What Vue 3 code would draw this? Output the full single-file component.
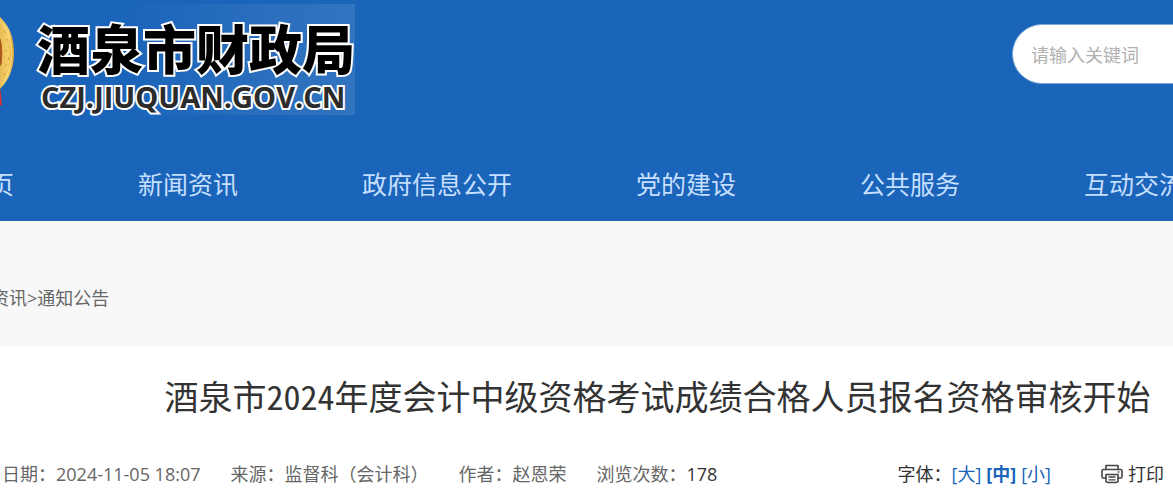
<script setup>
import { ref } from 'vue'

const nav = ['首页', '新闻资讯', '政府信息公开', '党的建设', '公共服务', '互动交流']
const meta = [
  { label: '日期', value: '2024-11-05 18:07' },
  { label: '来源', value: '监督科（会计科）' },
  { label: '作者', value: '赵恩荣' },
  { label: '浏览次数', value: '178', strong: true },
]
const sizes = ['大', '中', '小']
const current = ref('中')
const keyword = ref('')
</script>

<template>
  <div class="page">
    <header class="header">
      <div class="top">
        <a class="brand" href="#">
          <svg class="emblem" viewBox="0 0 16 111" aria-hidden="true">
            <defs>
              <linearGradient id="gold" x1="0" y1="0" x2="1" y2="0">
                <stop offset="0" stop-color="#e9bc55" />
                <stop offset="0.6" stop-color="#f6cf68" />
                <stop offset="1" stop-color="#d79c35" />
              </linearGradient>
            </defs>
            <path d="M0 84 L1 91 L2 102 L0 101 Z" fill="#d8322f" />
            <path d="M0 13 Q14 26 14 49 Q14 71 0 85 Z" fill="url(#gold)" />
            <path d="M0 17 Q11 29 12 49 Q12 67 2 80" fill="none" stroke="#f9dc84" stroke-width="1" />
            <path d="M4 27l1 2M7 35l1 2M5 46l2 1M9 53l-1 3M5 62l2-2M4 71l1-2M8 42l1 1" stroke="#cf983b" stroke-width="1" />
            <path d="M0 35 Q3 46 1 60 L0 62 Z" fill="#bd3a27" stroke="#a8651c" stroke-width="1" />
          </svg>
          <span class="wordmark">
            <span class="name">酒泉市财政局</span>
            <span class="domain">CZJ.JIUQUAN.GOV.CN</span>
          </span>
        </a>
        <form class="search" @submit.prevent>
          <input v-model="keyword" type="text" aria-label="请输入关键词" placeholder="请输入关键词" />
        </form>
      </div>
      <nav class="nav">
        <a v-for="item in nav" :key="item" href="#">{{ item }}</a>
      </nav>
    </header>

    <div class="crumbs">
      <a href="#">新闻资讯</a><span>&gt;</span><a href="#">通知公告</a>
    </div>

    <main class="article">
      <h1>酒泉市2024年度会计中级资格考试成绩合格人员报名资格审核开始</h1>
      <div class="info">
        <div class="meta">
          <span v-for="m in meta" :key="m.label">{{ m.label }}：<span :class="{ count: m.strong }">{{ m.value }}</span></span>
        </div>
        <div class="tools">
          <div class="sizes">
            <span>字体：</span>
            <button
              v-for="s in sizes"
              :key="s"
              type="button"
              :class="{ active: s === current }"
              @click="current = s"
            >[{{ s }}]</button>
          </div>
          <button class="print" type="button">
            <svg viewBox="0 0 22 20" aria-hidden="true" fill="none" stroke="#444" stroke-width="1.6" stroke-linejoin="round">
              <path d="M5 5V1.5H17V5" />
              <path d="M5 14H2.5Q1 14 1 12.5V7Q1 5.5 2.5 5.5H19.5Q21 5.5 21 7V12.5Q21 14 19.5 14H17" />
              <path d="M5 10.5H17V16.5Q17 18.5 15 18.5H7Q5 18.5 5 16.5Z" />
              <path d="M7.5 13H14.5M7.5 15.8H14.5" stroke-width="1.3" />
              <path d="M16.5 8H18.5" stroke-width="1.3" />
            </svg>
            打印
          </button>
        </div>
      </div>
    </main>
  </div>
</template>

<style>
body {
  margin: 0;
  background: #fff;
}
</style>

<style scoped>
.page {
  overflow: hidden;
  font-family: "Open Sans", "Noto Sans CJK SC", sans-serif;
  font-size: 18px;
  line-height: 26px;
  color: #666;
}
a {
  color: inherit;
  text-decoration: none;
}
button {
  padding: 0;
  border: 0;
  background: none;
  font: inherit;
  cursor: pointer;
}
.header {
  background: #1a64b9;
}
.top {
  display: flex;
  justify-content: space-between;
  align-items: flex-start;
  padding-top: 4px;
}
.brand {
  display: flex;
  background: linear-gradient(90deg, #1a64b9 35%, #2b6fbe 75%, #3174bf);
}
.emblem {
  width: 16px;
  height: 111px;
}
.wordmark {
  display: flex;
  flex-direction: column;
  padding: 13px 0 0 21px;
  white-space: nowrap;
}
.name {
  font-family: "Noto Sans CJK SC", sans-serif;
  font-size: 53px;
  line-height: 60px;
  font-weight: 900;
  color: #000;
  -webkit-text-stroke: 4px #fff;
  paint-order: stroke fill;
}
.domain {
  padding: 3px 0 0 4px;
  font-size: 29px;
  line-height: 34px;
  font-weight: 700;
  color: #2b2b2b;
  -webkit-text-stroke: 4px #fff;
  paint-order: stroke fill;
}
.search {
  margin: 20px -200px 0 0;
}
.search input {
  box-sizing: border-box;
  width: 361px;
  height: 60px;
  padding: 2px 18px 0;
  border: 1px solid #7ba7da;
  border-radius: 30px;
  background: #fff;
  font: inherit;
  color: #333;
  outline: 0;
}
.search input::placeholder {
  color: #b0b0b0;
  opacity: 1;
}
.nav {
  display: flex;
  gap: 124px;
  margin: 33px 0 0 -36px;
  padding: 18px 0 19px;
  font-size: 25px;
  line-height: 36px;
  white-space: nowrap;
  color: #c5dfff;
}
.crumbs {
  display: flex;
  margin-left: -45px;
  padding: 64px 0 36px 45px;
  background: #f8f8f8;
  white-space: nowrap;
}
.crumbs a:first-child {
  margin-left: -45px;
}
.article {
  background: #fff;
}
h1 {
  margin: 0;
  padding: 24px 0 0 142px;
  font-family: "Noto Sans CJK SC", sans-serif;
  font-size: 34px;
  line-height: 50px;
  font-weight: 400;
  font-feature-settings: "hwid";
  text-align: center;
  white-space: nowrap;
  color: #333;
}
.info {
  display: flex;
  justify-content: space-between;
  padding: 40px 9px 7px 2px;
  white-space: nowrap;
}
.meta {
  display: flex;
  gap: 30px;
}
.count,
.tools {
  color: #333;
}
.tools,
.sizes,
.print {
  display: flex;
  align-items: center;
}
.tools {
  gap: 50px;
}
.sizes {
  gap: 5px;
}
.sizes > span {
  margin-right: -5px;
}
.sizes button {
  color: #1a64b9;
}
.sizes .active {
  font-weight: 700;
}
.print {
  gap: 5px;
  color: #333;
}
.print svg {
  width: 22px;
  height: 20px;
}
</style>
